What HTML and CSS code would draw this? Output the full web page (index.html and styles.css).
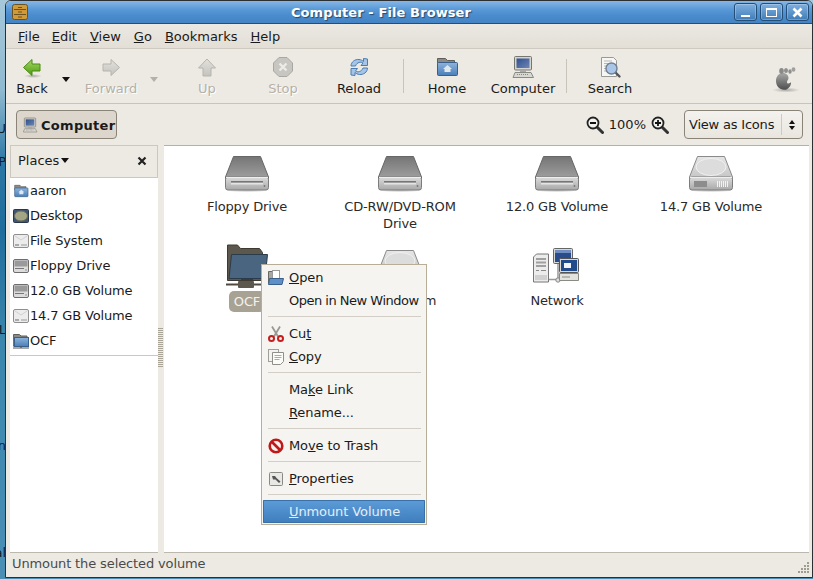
FILE: index.html
```html
<!DOCTYPE html>
<html lang="en">
<head>
  <meta charset="UTF-8" />
  <meta name="viewport" content="width=device-width, initial-scale=1.0" />
  <title>Computer - File Browser</title>
  <link rel="stylesheet" href="styles.css">
</head>
<body>
  <svg class="defs" width="0" height="0" aria-hidden="true">
    <defs>
      <linearGradient id="g-green" x1="0" y1="0" x2="0" y2="1">
        <stop offset="0" stop-color="#a6d96a"/><stop offset="1" stop-color="#4c9a0c"/>
      </linearGradient>
      <linearGradient id="g-grey" x1="0" y1="0" x2="0" y2="1">
        <stop offset="0" stop-color="#e2e1dc"/><stop offset="1" stop-color="#c4c3bd"/>
      </linearGradient>
      <linearGradient id="g-dark" x1="0" y1="0" x2="0" y2="1">
        <stop offset="0" stop-color="#757575"/><stop offset="1" stop-color="#a2a2a2"/>
      </linearGradient>
      <linearGradient id="g-light" x1="0" y1="0" x2="0" y2="1">
        <stop offset="0" stop-color="#e6e6e6"/><stop offset="1" stop-color="#c2c2c2"/>
      </linearGradient>
      <linearGradient id="g-face" x1="0" y1="0" x2="0" y2="1">
        <stop offset="0" stop-color="#dcdcdc"/><stop offset="1" stop-color="#a8a8a8"/>
      </linearGradient>
      <linearGradient id="g-blue" x1="0" y1="0" x2="0" y2="1">
        <stop offset="0" stop-color="#8db4dc"/><stop offset="1" stop-color="#4a7fb8"/>
      </linearGradient>
      <linearGradient id="g-screen" x1="0" y1="0" x2="1" y2="1">
        <stop offset="0" stop-color="#2f4f8f"/><stop offset="1" stop-color="#6f86b4"/>
      </linearGradient>
      <linearGradient id="g-foot" x1="0" y1="0" x2="0" y2="1">
        <stop offset="0" stop-color="#a8a8a8"/><stop offset="1" stop-color="#4d4d4d"/>
      </linearGradient>
      <radialGradient id="g-shadow">
        <stop offset="0" stop-color="#000" stop-opacity=".28"/><stop offset="1" stop-color="#000" stop-opacity="0"/>
      </radialGradient>

      <symbol id="i-drive" viewBox="0 0 48 48">
        <ellipse cx="24" cy="40" rx="23" ry="2.5" fill="url(#g-shadow)"/>
        <path d="M10.5 6.5h27L45.5 27v3h-43v-3z" fill="url(#g-dark)" stroke="#666"/>
        <rect x="2.5" y="27" width="43" height="13" rx="2.5" fill="url(#g-face)" stroke="#7c7c7c"/>
        <path d="M3 27.5h42" stroke="#eee"/>
        <rect x="8" y="31" width="32" height="1.5" fill="#777"/>
        <rect x="8" y="33" width="32" height="1.5" fill="#e4e4e4"/>
        <circle cx="41.5" cy="36" r=".9" fill="#777"/>
      </symbol>
      <symbol id="i-disk" viewBox="0 0 48 48">
        <ellipse cx="24" cy="40" rx="23" ry="2.5" fill="url(#g-shadow)"/>
        <path d="M10.5 6.5h27L45.5 27v3h-43v-3z" fill="url(#g-light)" stroke="#8a8a8a"/>
        <ellipse cx="24" cy="17" rx="15" ry="8.5" fill="#dcdcdc" stroke="#f0f0f0"/>
        <rect x="2.5" y="27" width="43" height="13" rx="2.5" fill="url(#g-face)" stroke="#7c7c7c"/>
        <path d="M3 27.5h42" stroke="#eee"/>
        <rect x="7" y="31" width="13" height="6" fill="#8d8d8d"/>
        <path d="M30.5 31v6M32.5 31v6M34.5 31v6M36.5 31v6M38.5 31v6M40.5 31v6" stroke="#f2f2f2"/>
      </symbol>
      <symbol id="i-small-drive" viewBox="0 0 16 16">
        <rect x=".5" y="1.5" width="15" height="13" rx="1.5" fill="#dcdcdc" stroke="#6d6d6d"/>
        <rect x="1.5" y="2.5" width="13" height="6" fill="#9a9a9a"/>
        <path d="M2 10.5h9" stroke="#777"/>
        <circle cx="13" cy="12" r=".7" fill="#777"/>
      </symbol>
      <symbol id="i-small-disk" viewBox="0 0 16 16">
        <rect x=".5" y="1.5" width="15" height="13" rx="1.5" fill="#ececec" stroke="#8f8f8f"/>
        <path d="M2 3l6 4 6-4" fill="none" stroke="#d0d0d0"/>
        <rect x="2" y="11" width="4" height="2" fill="#aaa"/>
        <path d="M9 11v2M11 11v2M13 11v2" stroke="#999"/>
      </symbol>
      <symbol id="i-home-folder" viewBox="0 0 24 24">
        <path d="M2.5 3.5h8l2 2h7v5h-17z" fill="#8b8a84" stroke="#5f5e58"/>
        <rect x="2.5" y="7.5" width="20" height="13" rx="1" fill="url(#g-blue)" stroke="#3a5f8a"/>
        <path d="M12.5 10l-4.500 4h1.500v3h6v-3h1.500z" fill="#dfe7ef"/>
      </symbol>
      <symbol id="i-monitor" viewBox="0 0 24 24">
        <rect x="3.500" y="1.500" width="17" height="13.500" rx="1" fill="#d4d4d0" stroke="#77776f"/>
        <rect x="5.500" y="3.500" width="13" height="9.500" fill="url(#g-screen)"/>
        <path d="M9 15h6v2H9z" fill="#aaa"/>
        <path d="M2 22.500l2-5h16l2.500 5z" fill="#d8d8d2" stroke="#8a8a84"/>
        <path d="M6 19.500h12" stroke="#888" stroke-dasharray="1 1"/>
      </symbol>
      <symbol id="i-zoom" viewBox="0 0 18 18">
        <path d="M10.500 10.500l6 6" stroke="#333" stroke-width="3" stroke-linecap="round"/>
        <circle cx="7" cy="7" r="5.500" fill="#f2f2ee" stroke="#222" stroke-width="1.800"/>
      </symbol>
    </defs>
  </svg>

  <div class="desktop">
    <span class="peek peek-u">U</span>
    <span class="peek peek-p">P</span>
    <span class="peek peek-l">L</span>
    <span class="peek peek-n">n</span>
    <span class="peek peek-al">al</span>
  </div>

  <div class="window">
    <header class="titlebar">
      <svg class="title-icon" width="16" height="16" viewBox="0 0 16 16">
        <rect x=".5" y=".5" width="15" height="15" rx="2" fill="#d09a38" stroke="#6b5320"/>
        <path d="M2 5.500h12M2 10.500h12M6 3.500h4M6 8h4M6 13h4" stroke="#6b5320"/>
      </svg>
      <div class="title-text">Computer - File Browser</div>
      <div class="wm-buttons">
        <div class="wm-btn"><span class="wm-min"></span></div>
        <div class="wm-btn"><span class="wm-max"></span></div>
        <div class="wm-btn">
          <svg width="11" height="11" viewBox="0 0 11 11"><path d="M1.500 1.500l8 8M9.500 1.500l-8 8" stroke="#fff" stroke-width="2.600"/></svg>
        </div>
      </div>
    </header>

    <nav class="menubar">
      <span><u>F</u>ile</span>
      <span><u>E</u>dit</span>
      <span><u>V</u>iew</span>
      <span><u>G</u>o</span>
      <span><u>B</u>ookmarks</span>
      <span><u>H</u>elp</span>
    </nav>

    <div class="toolbar">
      <div class="tool tool-back">
        <svg width="24" height="24" viewBox="0 0 24 24">
          <ellipse cx="13" cy="21" rx="9" ry="2" fill="url(#g-shadow)"/>
          <path d="M3.500 12.500L12 4.500V9h8v7h-8v4.500z" fill="url(#g-green)" stroke="#4a8a10"/>
        </svg>
        <span>Back</span>
      </div>
      <div class="tool-arrow"><i class="caret"></i></div>
      <div class="tool tool-forward is-off">
        <svg width="24" height="24" viewBox="0 0 24 24">
          <path d="M20.500 12.500L12 4.500V9H4v7h8v4.500z" fill="url(#g-grey)" stroke="#b5b4ae"/>
        </svg>
        <span>Forward</span>
      </div>
      <div class="tool-arrow tool-arrow-off"><i class="caret"></i></div>
      <div class="tool is-off">
        <svg width="24" height="24" viewBox="0 0 24 24">
          <path d="M12 4l8.500 9H16v8H8v-8H3.500z" fill="url(#g-grey)" stroke="#b5b4ae"/>
        </svg>
        <span>Up</span>
      </div>
      <div class="tool is-off">
        <svg width="24" height="24" viewBox="0 0 24 24">
          <path d="M8 2.500h8l5.500 5.500v8L16 21.500H8L2.500 16V8z" fill="#c8c6c0" stroke="#a8a7a1"/>
          <path d="M8.500 8.500l7 7M15.500 8.500l-7 7" stroke="#ecebe6" stroke-width="2.400"/>
        </svg>
        <span>Stop</span>
      </div>
      <div class="tool">
        <svg width="24" height="24" viewBox="0 0 24 24">
          <path d="M4 11c0-4 4-7 8-6.500 2 .2 3.500 1 4.500 2V3.500l4 .5v6.500h-6.500l2-2.500C14 6.500 10 7 8.500 11z" fill="#a5c4e6" stroke="#4a7cb4"/>
          <path d="M20.500 13c0 4-4 7-8 6.500-2-.2-3.500-1-4.500-2v3l-4-.5v-6.500h6.500l-2 2.500c2 1.500 6 1 7.500-3z" fill="#a5c4e6" stroke="#4a7cb4"/>
        </svg>
        <span>Reload</span>
      </div>
      <div class="tool-sep"></div>
      <div class="tool">
        <svg width="24" height="24"><use href="#i-home-folder"/></svg>
        <span>Home</span>
      </div>
      <div class="tool">
        <svg width="24" height="24"><use href="#i-monitor"/></svg>
        <span>Computer</span>
      </div>
      <div class="tool-sep tool-sep-narrow"></div>
      <div class="tool">
        <svg width="24" height="24" viewBox="0 0 24 24">
          <path d="M3.500 2.500h12l3 3v16h-15z" fill="#f6f6f4" stroke="#9a9a94"/>
          <path d="M6 6h8M6 8.500h8M6 11h5M6 13.500h4M6 16h4" stroke="#b8b8b2"/>
          <path d="M17 17l4.500 4.500" stroke="#555" stroke-width="2.400" stroke-linecap="round"/>
          <circle cx="13.500" cy="13.500" r="5.500" fill="#a9c6e8" stroke="#6d7f94" stroke-width="1.400"/>
        </svg>
        <span>Search</span>
      </div>
      <svg class="gnome-foot" width="28" height="28" viewBox="0 0 28 28">
        <ellipse cx="14" cy="24" rx="14" ry="2.500" fill="url(#g-shadow)"/>
        <path d="M4 15c0-4.500 3-8 7-8 3.500 0 5.500 2.500 5.500 5 0 2-1.800 2.800-1.500 4.500.3 1.500 2.800 1.200 4-.5.500 4-3 8-7 7.800-4.500-.2-8-3.800-8-8.800z" fill="url(#g-foot)"/>
        <ellipse cx="9.500" cy="5" rx="2.300" ry="2.900" fill="#8a8a8a"/>
        <ellipse cx="14" cy="4.500" rx="2" ry="2.600" fill="#8f8f8f"/>
        <ellipse cx="18" cy="5.500" rx="1.700" ry="2.200" fill="#8f8f8f"/>
        <ellipse cx="21.500" cy="3.500" rx="1.900" ry="2.200" fill="#a0a0a0"/>
      </svg>
    </div>

    <div class="locationbar">
      <button class="path-btn">
        <svg width="16" height="16"><use href="#i-monitor"/></svg>
        <span>Computer</span>
      </button>
      <div class="zoom-controls">
        <div class="zoom-icon">
          <svg width="18" height="18"><use href="#i-zoom"/></svg>
          <svg class="zoom-mark" width="18" height="18" viewBox="0 0 18 18"><path d="M4 7h6" stroke="#111" stroke-width="1.800"/></svg>
        </div>
        <span class="zoom-value">100%</span>
        <div class="zoom-icon">
          <svg width="18" height="18"><use href="#i-zoom"/></svg>
          <svg class="zoom-mark" width="18" height="18" viewBox="0 0 18 18"><path d="M4 7h6M7 4v6" stroke="#111" stroke-width="1.800"/></svg>
        </div>
      </div>
      <div class="view-select">
        <span class="view-label">View as Icons</span>
        <span class="view-arrows"><i class="up"></i><i class="down"></i></span>
      </div>
    </div>

    <div class="panes">
      <aside class="sidebar">
        <div class="side-head">
          <span>Places</span><i class="caret"></i>
          <svg class="side-close" width="10" height="10" viewBox="0 0 10 10"><path d="M1.500 1.500l7 7M8.500 1.500l-7 7" stroke="#222" stroke-width="2.200"/></svg>
        </div>
        <ul class="places">
          <li><svg width="16" height="16" viewBox="0 0 24 24"><use href="#i-home-folder"/></svg>aaron</li>
          <li>
            <svg width="16" height="16" viewBox="0 0 16 16">
              <rect x=".5" y="1.500" width="15" height="13" rx="1" fill="#3f5573" stroke="#27364c"/>
              <ellipse cx="8" cy="8" rx="6.500" ry="5" fill="#a3a584" stroke="#6c6e56"/>
            </svg>Desktop
          </li>
          <li><svg width="16" height="16"><use href="#i-small-disk"/></svg>File System</li>
          <li><svg width="16" height="16"><use href="#i-small-drive"/></svg>Floppy Drive</li>
          <li><svg width="16" height="16"><use href="#i-small-drive"/></svg>12.0 GB Volume</li>
          <li><svg width="16" height="16"><use href="#i-small-disk"/></svg>14.7 GB Volume</li>
          <li>
            <svg width="16" height="16" viewBox="0 0 16 16">
              <path d="M.5 1.500h6l1.500 1.500h6v10h-14z" fill="#8b8a84" stroke="#5f5e58"/>
              <rect x="1.500" y="4.500" width="14" height="9" fill="url(#g-blue)" stroke="#3a5f8a"/>
              <path d="M0 15h16M8 13v2" stroke="#555" stroke-width="1.200"/>
            </svg>OCF
          </li>
        </ul>
        <div class="side-rule"></div>
      </aside>

      <div class="grip"><div class="grip-dots"></div></div>

      <main class="files">
        <div class="file">
          <svg width="48" height="48"><use href="#i-drive"/></svg>
          <span class="file-name">Floppy Drive</span>
        </div>
        <div class="file">
          <svg width="48" height="48"><use href="#i-drive"/></svg>
          <span class="file-name">CD-RW/DVD-ROM Drive</span>
        </div>
        <div class="file">
          <svg width="48" height="48"><use href="#i-drive"/></svg>
          <span class="file-name">12.0 GB Volume</span>
        </div>
        <div class="file">
          <svg width="48" height="48"><use href="#i-disk"/></svg>
          <span class="file-name">14.7 GB Volume</span>
        </div>
        <div class="file">
          <svg width="48" height="48" viewBox="0 0 48 48">
            <path d="M4.500 1h10l3 3.500h19l3 4v28h-35z" fill="#5d584e" stroke="#3e3a32"/>
            <path d="M8.500 10.500h36l-2.500 24h-36z" fill="#4a6580" stroke="#2a3b4c"/>
            <rect x="18" y="35" width="12" height="5" fill="#3f3b33"/>
            <path d="M3 40.500h42" stroke="#4e4a42" stroke-width="2"/>
            <rect x="15" y="37" width="16" height="7" rx="1" fill="#5d584e"/>
          </svg>
          <span class="file-name is-selected">OCF</span>
        </div>
        <div class="file">
          <svg width="48" height="48"><use href="#i-disk"/></svg>
          <span class="file-name">File System</span>
        </div>
        <div class="file">
          <svg width="48" height="48" viewBox="0 0 48 48">
            <path d="M.5 13l3-3h12v28H.5z" fill="#ececec" stroke="#777"/>
            <path d="M3 15h10M3 18.500h10M3 22h10" stroke="#a0a0a0" stroke-width="2"/>
            <path d="M3 26.500h3M8 26.500h5" stroke="#888"/>
            <path d="M3 31v5M5 31v5M7 31v5M9 31v5M11 31v5M13 31v5" stroke="#b4b4b4"/>
            <path d="M16 35.500h9M25 17v18" stroke="#999" stroke-width="1.500"/>
            <circle cx="25" cy="36" r="2.200" fill="#ddd" stroke="#888"/>
            <rect x="20.500" y="4.500" width="19" height="15" rx="1" fill="#d8d8d4" stroke="#666"/>
            <rect x="22" y="6" width="16" height="12" fill="#2a4c8c"/>
            <rect x="22" y="6" width="16" height="3" fill="#6f8fc0"/>
            <rect x="26.500" y="14.500" width="19" height="14" rx="1" fill="#d8d8d4" stroke="#555"/>
            <rect x="28" y="16" width="16" height="11" fill="#214a8c"/>
            <rect x="31" y="19" width="7" height="5" fill="#f2f2f8"/>
            <path d="M26.500 36.500v-7h19v7z" fill="#e2e2de" stroke="#8a8a84"/>
            <path d="M29 33h8" stroke="#888"/>
          </svg>
          <span class="file-name">Network</span>
        </div>

        <div class="context-menu">
          <div class="menu-item">
            <svg width="16" height="16" viewBox="0 0 16 16">
              <path d="M.5 1.500h5l1.500 1.500h2v10h-8.500z" fill="#a8a8a2" stroke="#6a6a64"/>
              <rect x="4.500" y=".5" width="7" height="8" fill="#fff" stroke="#999"/>
              <path d="M1.500 8.500h14l-1.500 6H.5z" fill="#5f8fc8" stroke="#3a5f8a"/>
            </svg>
            <span><u>O</u>pen</span>
          </div>
          <div class="menu-item menu-tight"><span class="menu-blank"></span><span>Open in New Window</span></div>
          <hr>
          <div class="menu-item">
            <svg width="16" height="16" viewBox="0 0 16 16">
              <path d="M4 .5l6 10M12 .5l-6 10" stroke="#9a9a94" stroke-width="1.800"/>
              <circle cx="3.500" cy="12.500" r="2.500" fill="none" stroke="#c41e1e" stroke-width="2"/>
              <circle cx="12.500" cy="12.500" r="2.500" fill="none" stroke="#c41e1e" stroke-width="2"/>
            </svg>
            <span>Cu<u>t</u></span>
          </div>
          <div class="menu-item">
            <svg width="16" height="16" viewBox="0 0 16 16">
              <rect x=".5" y=".5" width="10" height="12" fill="#f2f2ee" stroke="#a0a09a"/>
              <path d="M4.500 3.500h11v9l-3 3h-8z" fill="#fbfbf9" stroke="#8f8f89"/>
              <path d="M6.500 6.500h7M6.500 8.500h7M6.500 10.500h5" stroke="#aaa"/>
            </svg>
            <span><u>C</u>opy</span>
          </div>
          <hr>
          <div class="menu-item"><span class="menu-blank"></span><span>Ma<u>k</u>e Link</span></div>
          <div class="menu-item"><span class="menu-blank"></span><span><u>R</u>ename...</span></div>
          <hr>
          <div class="menu-item">
            <svg width="16" height="16" viewBox="0 0 16 16">
              <circle cx="8" cy="8" r="6.300" fill="#f4f2ee" stroke="#c01818" stroke-width="2.600"/>
              <path d="M3.500 3.500l9 9" stroke="#c01818" stroke-width="2.600"/>
            </svg>
            <span>Mo<u>v</u>e to Trash</span>
          </div>
          <hr>
          <div class="menu-item">
            <svg width="16" height="16" viewBox="0 0 16 16">
              <rect x="1.500" y="1.500" width="13" height="13" rx="1" fill="#e8e8e4" stroke="#8a8a84"/>
              <path d="M4 5h3l1.500 2 4 3.500-1.500 1.500-3.500-3.500H5z" fill="#555"/>
            </svg>
            <span><u>P</u>roperties</span>
          </div>
          <hr>
          <div class="menu-item is-active"><span class="menu-blank"></span><span><u>U</u>nmount Volume</span></div>
        </div>
      </main>
    </div>

    <footer class="statusbar">
      <span>Unmount the selected volume</span>
      <svg class="resize-grip" width="12" height="12" viewBox="0 0 12 12">
        <path d="M10 0h2v2h-2zM7 3h2v2H7zM10 3h2v2h-2zM4 6h2v2H4zM7 6h2v2H7zM10 6h2v2h-2zM1 9h2v2H1zM4 9h2v2H4zM7 9h2v2H7zM10 9h2v2h-2z" fill="#a09c92"/>
      </svg>
    </footer>
  </div>
</body>
</html>
```

FILE: styles.css
```css
* {
  box-sizing: border-box;
}

html, body {
  margin: 0;
  height: 579px;
  overflow: hidden;
}

body {
  position: relative;
  background: #3f88b0;
  font-family: "DejaVu Sans", sans-serif;
  font-size: 13px;
  color: #1a1a1a;
}

.defs {
  position: absolute;
}

/* bits of desktop showing left of the window */
.desktop {
  position: absolute;
  inset: 0;
  background: linear-gradient(to bottom, #a6c8da 0, #8fbad0 90px, #2a76a4 165px, #1f6d9c 230px, #3a86ad 340px, #4b8fb5 579px);
}

.peek {
  position: absolute;
  right: calc(100% - 6px);
  width: 20px;
  text-align: right;
  color: #0b1e2b;
  font-size: 13px;
  line-height: 15px;
}

.peek-u { top: 121px; }
.peek-p { top: 154px; }
.peek-l { top: 322px; }
.peek-n { top: 438px; }
.peek-al { top: 545px; }

.window {
  position: absolute;
  left: 5px;
  top: 0;
  width: 808px;
  height: 578px;
  display: flex;
  flex-direction: column;
  background: #edeae4;
  border: 1px solid #2d3033;
  border-radius: 6px 6px 0 0;
  overflow: hidden;
}

/* title bar */
.titlebar {
  flex: none;
  height: 23px;
  display: flex;
  align-items: center;
  padding: 0 3px 0 6px;
  background: linear-gradient(to bottom, #86b7e6 0, #5b9ad8 8px, #4a8cce 14px, #4484c4 100%);
  border-bottom: 1px solid #234e78;
}

.title-text {
  flex: 1;
  text-align: center;
  font-weight: bold;
  color: #fff;
  text-shadow: 1px 1px 1px #24496e;
  letter-spacing: 0.1px;
}

.wm-buttons {
  display: flex;
  gap: 3px;
}

.wm-btn {
  width: 23px;
  height: 18px;
  display: flex;
  align-items: center;
  justify-content: center;
  background: linear-gradient(to bottom, #7fb0e0, #3f7cb8);
  border: 1px solid #234e78;
  border-radius: 3px;
  box-shadow: inset 0 0 0 1px rgba(255, 255, 255, 0.25);
}

.wm-min {
  width: 9px;
  height: 2px;
  margin-top: 7px;
  background: #fff;
}

.wm-max {
  width: 11px;
  height: 9px;
  border: 1px solid #fff;
  border-top-width: 2px;
}

/* menu bar */
.menubar {
  flex: none;
  height: 25px;
  display: flex;
  align-items: center;
  gap: 13px;
  padding-left: 12px;
  background: linear-gradient(to bottom, #ebe8e2, #e3dfd7);
  border-bottom: 1px solid #cfcac1;
}

.menubar span:first-child {
  margin-right: -1px;
}

/* toolbar */
.toolbar {
  flex: none;
  height: 55px;
  display: flex;
  align-items: flex-start;
  padding: 6px 4px 0;
  border-bottom: 1px solid #c9c4ba;
}

.tool {
  width: 76px;
  display: flex;
  flex-direction: column;
  align-items: center;
  line-height: 17px;
}

.tool span {
  margin-top: 1px;
}

.tool-back {
  width: 44px;
}

.tool-forward {
  width: 66px;
}

.is-off {
  color: #b5b1a8;
  text-shadow: 1px 1px 0 #fff;
}

.tool-arrow {
  width: 24px;
  height: 24px;
  margin-top: 12px;
  display: flex;
  justify-content: center;
  align-items: center;
}

.tool-arrow-off {
  width: 20px;
  margin-right: 5px;
}

.tool-arrow-off .caret {
  border-top-color: #b5b1a8;
}

.caret {
  display: inline-block;
  width: 0;
  height: 0;
  border-left: 4.5px solid transparent;
  border-right: 4.5px solid transparent;
  border-top: 5px solid #111;
}

.tool-sep {
  width: 12px;
  height: 34px;
  margin-top: 4px;
  background: linear-gradient(#c9c4ba, #c9c4ba) center / 1px 100% no-repeat;
}

.tool-sep-narrow {
  width: 11px;
}

.gnome-foot {
  margin-left: auto;
  margin-top: 11px;
  margin-right: 8px;
}

/* location bar */
.locationbar {
  flex: none;
  height: 41px;
  display: flex;
  align-items: center;
  padding: 0 9px 0 10px;
}

.path-btn {
  width: 101px;
  height: 29px;
  display: flex;
  align-items: center;
  gap: 3px;
  padding: 1px 0 0 5px;
  font: bold 13px "DejaVu Sans", sans-serif;
  letter-spacing: 0.3px;
  color: #1a1a1a;
  background: #dcd6cd;
  border: 1px solid #8a8478;
  border-radius: 4px;
}

.zoom-controls {
  margin-left: auto;
  display: flex;
  align-items: center;
  gap: 5px;
  margin-right: 15px;
}

.zoom-icon {
  position: relative;
  width: 18px;
  height: 18px;
}

.zoom-mark {
  position: absolute;
  left: 0;
  top: 0;
}

.view-select {
  width: 119px;
  height: 29px;
  display: flex;
  align-items: center;
  background: linear-gradient(to bottom, #f4f2ee, #e9e6df);
  border: 1px solid #8a8478;
  border-radius: 4px;
}

.view-label {
  width: 97px;
  padding-left: 4px;
  border-right: 1px solid #cfcac1;
  line-height: 21px;
  letter-spacing: -0.2px;
}

.view-arrows {
  flex: 1;
  display: flex;
  flex-direction: column;
  align-items: center;
  gap: 2px;
}

.view-arrows i {
  width: 0;
  height: 0;
  border-left: 3.5px solid transparent;
  border-right: 3.5px solid transparent;
}

.view-arrows .up {
  border-bottom: 4px solid #111;
}

.view-arrows .down {
  border-top: 4px solid #111;
}

/* sidebar and icon view */
.panes {
  flex: 1;
  min-height: 0;
  display: flex;
  padding: 0 3px 0 4px;
}

.sidebar {
  width: 148px;
  background: #fff;
  border-bottom: 1px solid #bdb8ae;
}

.side-head {
  height: 33px;
  display: flex;
  align-items: center;
  gap: 2px;
  padding: 0 10px 2px 7px;
  background: #edeae4;
  border: 1px solid #cdc8bf;
}

.side-close {
  margin-left: auto;
}

.places {
  list-style: none;
  margin: 0;
  padding: 0;
}

.places li {
  height: 25px;
  display: flex;
  align-items: center;
  gap: 1px;
  padding-left: 3px;
  white-space: nowrap;
  letter-spacing: -0.15px;
}

.side-rule {
  height: 1px;
  margin-top: 2px;
  background: #cdc8bf;
}

.grip {
  width: 6px;
  padding-top: 183px;
}

.grip-dots {
  width: 5px;
  height: 40px;
  background: repeating-linear-gradient(to bottom, #a8a498 0 1px, #edeae4 1px 2px);
}

.files {
  position: relative;
  flex: 1;
  display: grid;
  grid-template-columns: 154px 152px 162px 146px;
  grid-template-rows: 94px auto;
  align-content: start;
  padding: 4px 0 0 6px;
  background: #fff;
  border-top: 1px solid #b8b0a0;
  border-bottom: 1px solid #bdb8ae;
}

.file {
  display: flex;
  flex-direction: column;
  align-items: center;
  text-align: center;
  line-height: 17px;
}

.file-name {
  display: block;
  max-width: 130px;
  color: #2a2a2a;
  letter-spacing: -0.15px;
}

.is-selected {
  padding: 2px 5px;
  margin-top: -1px;
  background: #a8a294;
  color: #f4f2ee;
  border-radius: 5px;
}

/* right click menu */
.context-menu {
  position: absolute;
  left: 97px;
  top: 118px;
  width: 166px;
  padding: 1px;
  background: #f6f4f0;
  border: 1px solid #b8ad96;
  letter-spacing: -0.1px;
}

.menu-item {
  height: 23px;
  display: flex;
  align-items: center;
  gap: 5px;
  padding-left: 5px;
  color: #1a1a1a;
  white-space: nowrap;
}

.menu-tight {
  letter-spacing: -0.5px;
}

.menu-blank {
  flex: none;
  width: 16px;
  height: 16px;
}

.context-menu hr {
  height: 1px;
  margin: 4px 4px 5px 5px;
  border: none;
  background: #d3cfc6;
}

.is-active {
  color: #e4edf7;
  background: linear-gradient(to bottom, #5c9cd8, #3f7dbd);
  box-shadow: inset 0 0 0 1px #3a70a8;
  border-radius: 1px;
}

/* status bar */
.statusbar {
  flex: none;
  height: 24px;
  display: flex;
  align-items: center;
  padding: 0 3px 3px 6px;
  color: #4a4a4a;
  letter-spacing: -0.12px;
}

.resize-grip {
  margin-left: auto;
  margin-top: 9px;
}
```
